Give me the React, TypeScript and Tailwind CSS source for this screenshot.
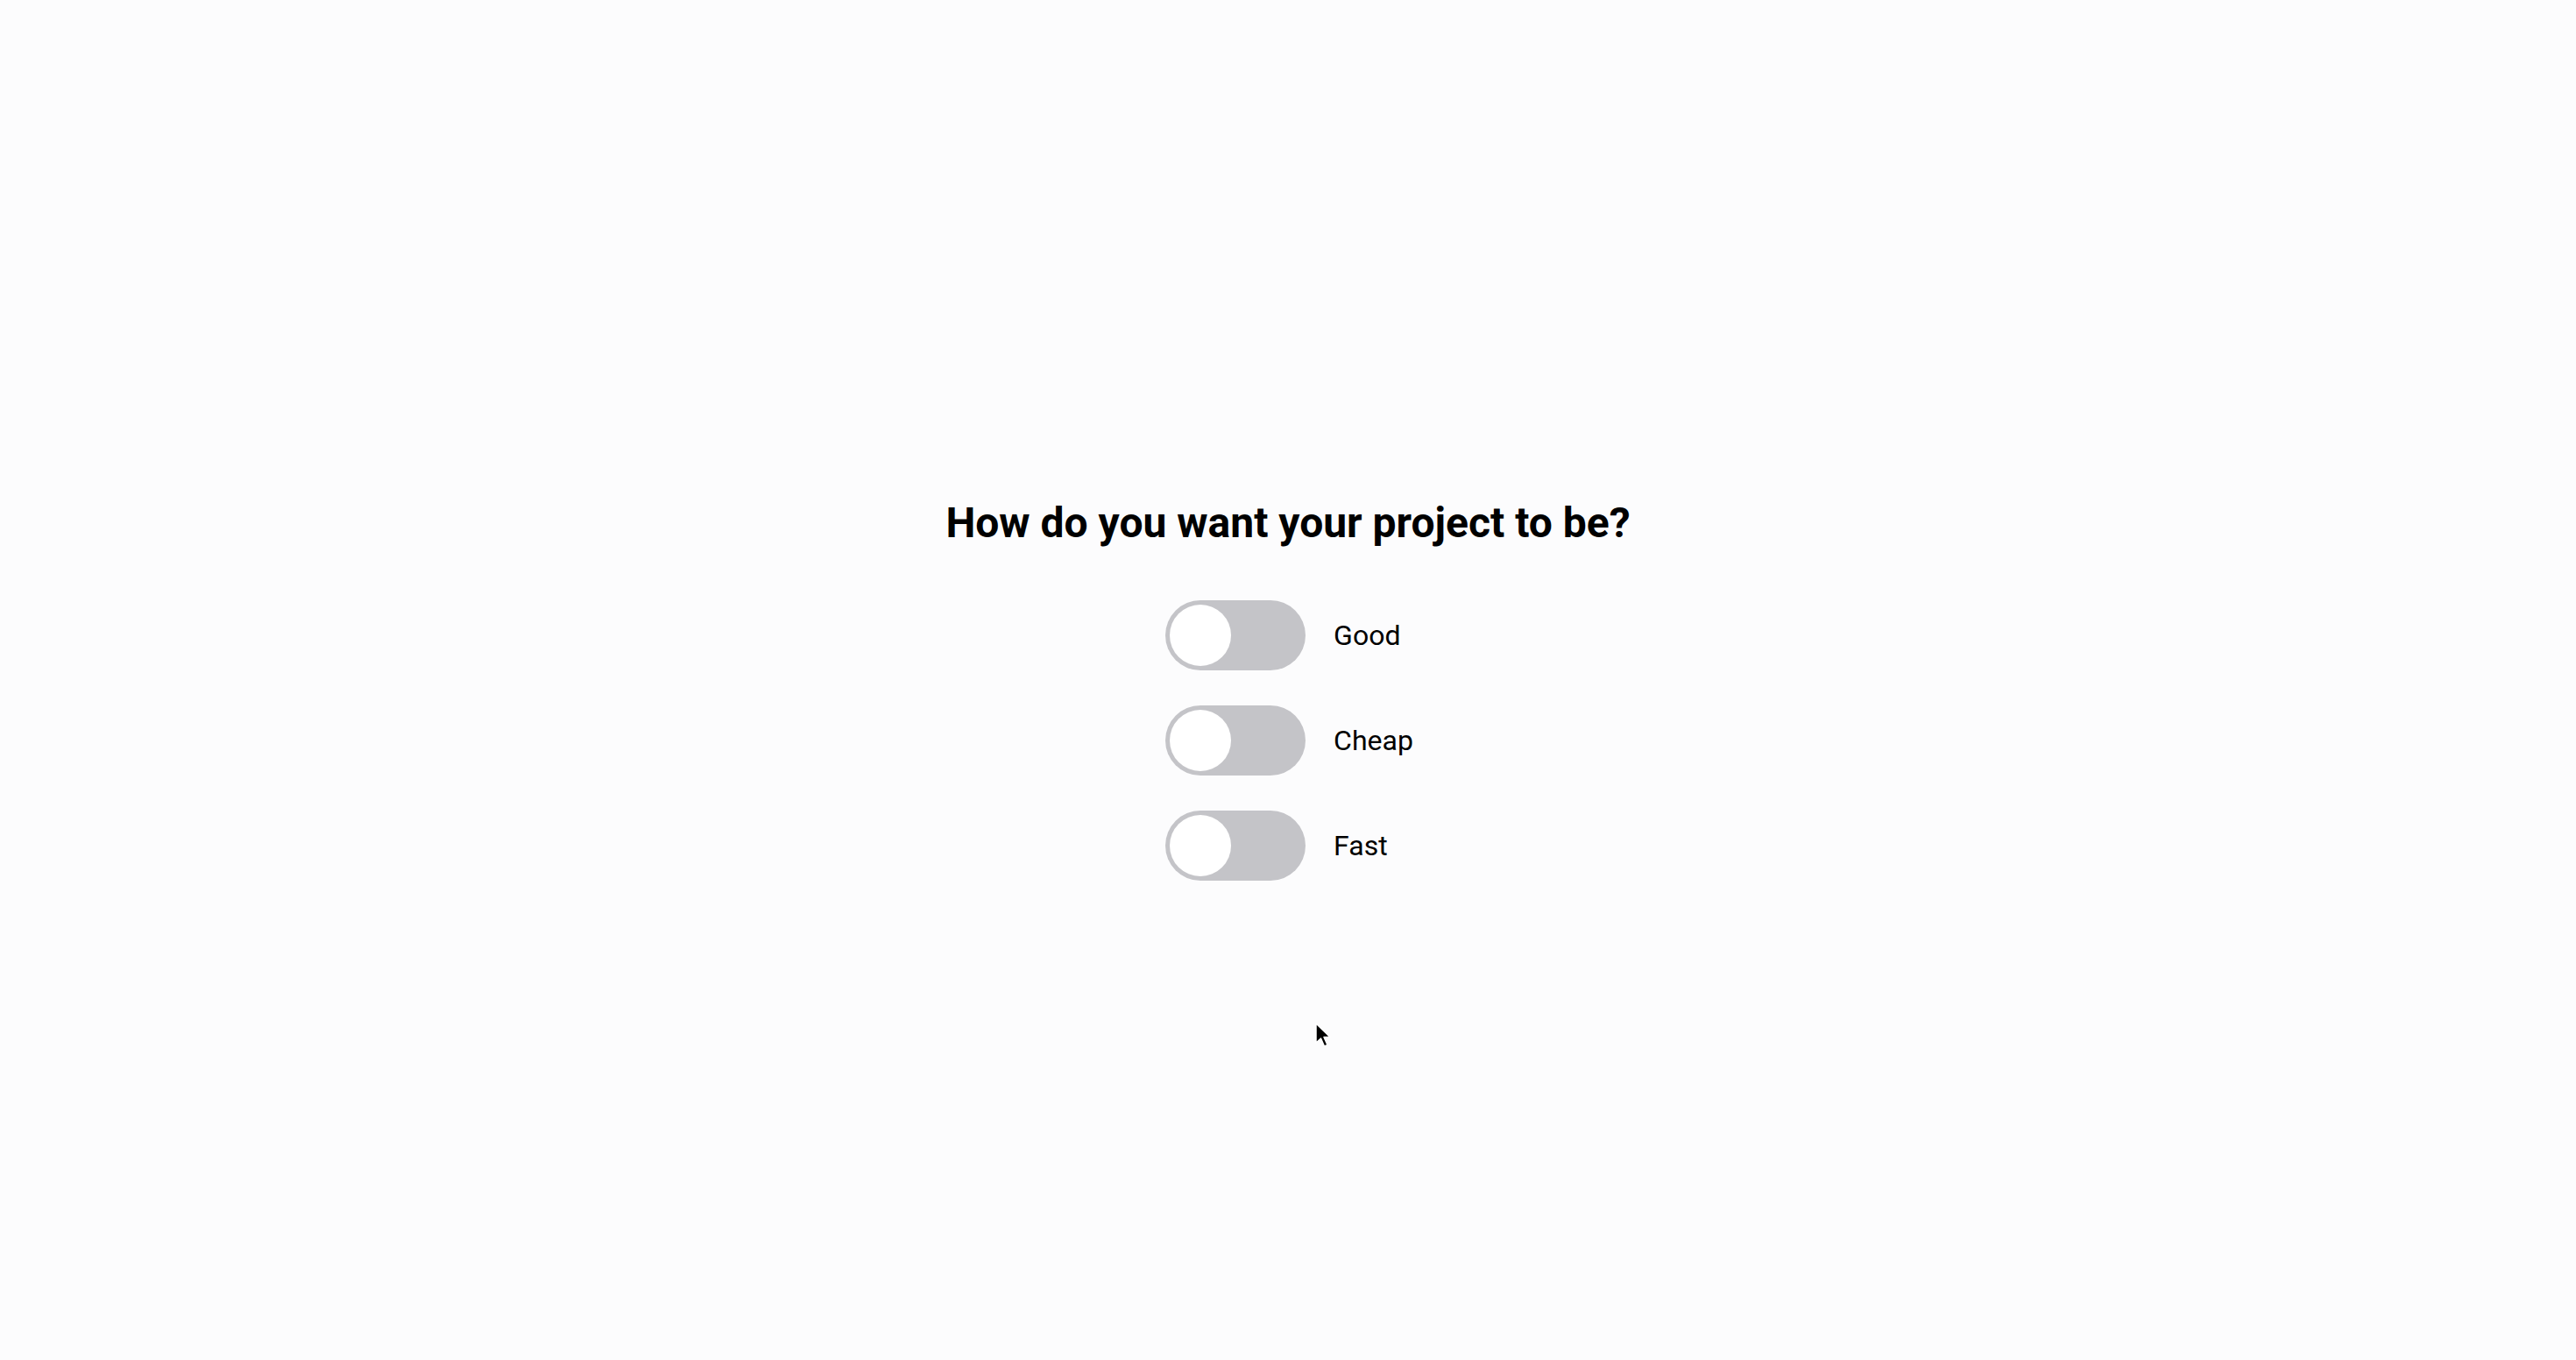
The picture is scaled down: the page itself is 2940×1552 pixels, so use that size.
import { useState } from "react";

const options = ["Good", "Cheap", "Fast"];

function Toggle({ on, onClick }: { on: boolean; onClick: () => void }) {
  return (
    <button
      type="button"
      onClick={onClick}
      className={`relative flex h-[80px] w-[160px] shrink-0 items-center rounded-full p-[5px] transition-colors ${
        on ? "bg-[#6e4fe6]" : "bg-[#c4c4c8]"
      }`}
    >
      <span
        className={`block h-[70px] w-[70px] rounded-full bg-white transition-transform ${
          on ? "translate-x-[80px]" : "translate-x-0"
        }`}
      />
    </button>
  );
}

function Cursor() {
  return (
    <svg
      className="absolute left-[1500px] top-[1166px]"
      width="22"
      height="32"
      viewBox="0 0 22 32"
      aria-hidden="true"
    >
      <path
        d="M2 2 L2 24 L7.5 19 L11.5 28 L15 26.5 L11 17.5 L18 17.5 Z"
        fill="#000"
        stroke="#fff"
        strokeWidth="1.5"
        strokeLinejoin="round"
      />
    </svg>
  );
}

export default function App() {
  const [state, setState] = useState<Record<string, boolean>>({});

  return (
    <div
      className="relative flex min-h-screen flex-col items-center justify-center bg-[#fcfcfd] pt-[21px] text-black"
      style={{ fontFamily: "Roboto, 'Noto Sans', sans-serif" }}
    >
      <h1 className="mb-[59px] text-[48px] font-bold leading-[1.2]">
        How do you want your project to be?
      </h1>
      <div className="flex flex-col gap-[40px] pl-[3px]">
        {options.map((opt) => (
          <div key={opt} className="flex items-center gap-[32px]">
            <Toggle
              on={!!state[opt]}
              onClick={() => setState((s) => ({ ...s, [opt]: !s[opt] }))}
            />
            <span className="text-[32px] leading-none">{opt}</span>
          </div>
        ))}
      </div>
      <Cursor />
    </div>
  );
}
